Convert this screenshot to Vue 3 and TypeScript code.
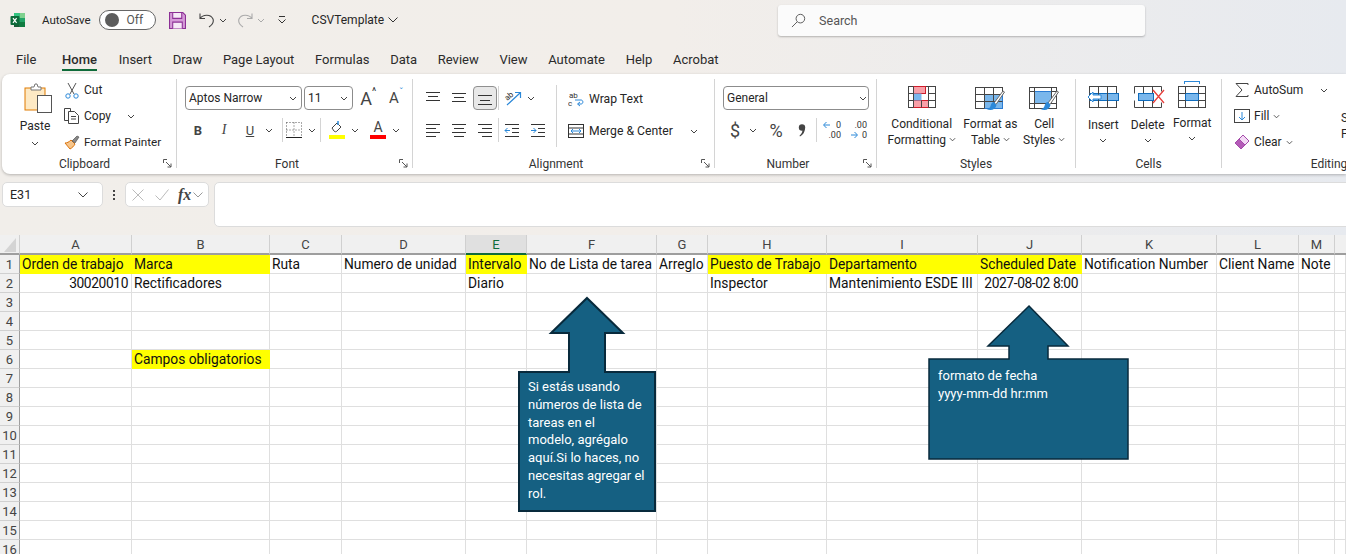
<template>
  <div class="app">
    <!-- Title bar -->
    <header class="titlebar">
      <svg class="logo" viewBox="0 0 16 16" width="16" height="16">
        <rect x="4" y="1" width="11" height="14" rx="1.2" fill="#21a366" />
        <rect x="9.5" y="1" width="5.5" height="5" fill="#7fd18f" />
        <rect x="4" y="1" width="5.5" height="5" fill="#33c481" />
        <rect x="9.5" y="10" width="5.5" height="5" fill="#107c41" />
        <rect x="4" y="10" width="5.5" height="5" fill="#185c37" />
        <rect x="0.5" y="4" width="9" height="9" rx="1" fill="#0b6a39" />
        <path d="M3 6.2l3.6 4.6M6.6 6.2L3 10.8" stroke="#fff" stroke-width="1.2" />
      </svg>
      <span class="autosave">AutoSave</span>
      <span class="toggle"><i class="knob" /><span>Off</span></span>
      <svg class="save" viewBox="0 0 16 16" width="17" height="17">
        <path d="M.5.5h12.5l2.5 2.5v12.5H.5z" fill="#d59ad8" stroke="#8c2f95" />
        <path d="M3.5.5h8.5v5.5H3.5zM3.5 15.5v-6h9v6" fill="#f6e8f7" stroke="#8c2f95" />
      </svg>
      <svg class="undo" viewBox="0 0 16 16" width="16" height="16" fill="none" stroke="#444" stroke-width="1.1">
        <path d="M1 1.5v5h5M1 6.5c3-4.5 11-4.500 13 .5 1 3-1 6-4 8" />
      </svg>
      <svg class="chev qat" viewBox="0 0 8 5"><path d="M1 1l3 3 3-3" /></svg>
      <svg class="redo" viewBox="0 0 16 16" width="16" height="16" fill="none" stroke="#aaa" stroke-width="1.1">
        <path d="M15 1.500v5h-5M15 6.500c-3-4.500-11-4.500-13 .5-1 3 1 6 4 8" />
      </svg>
      <svg class="chev qat muted" viewBox="0 0 8 5"><path d="M1 1l3 3 3-3" /></svg>
      <svg class="custom" viewBox="0 0 10 8" width="10" height="8" fill="none" stroke="#333">
        <path d="M2 .5h6M1.500 3.500L5 7l3.500-3.500" />
      </svg>
      <span class="docname">CSVTemplate</span>
      <svg class="doc-chev" viewBox="0 0 10 6" width="10" height="6" fill="none" stroke="#333">
        <path d="M.5.5L5 5 9.500.5" />
      </svg>
      <div class="search">
        <svg viewBox="0 0 16 16" width="15" height="15" fill="none" stroke="#555">
          <circle cx="10" cy="6" r="4.600" />
          <path d="M6.500 9.500L1 15" />
        </svg>
        <span>Search</span>
      </div>
    </header>

    <!-- Tabs -->
    <nav class="tabs">
      <span v-for="tab in tabs" :key="tab" class="tab" :class="{ active: tab === 'Home' }">{{ tab }}</span>
    </nav>

    <!-- Ribbon -->
    <section class="ribbon">
      <!-- Clipboard -->
      <div class="group g-clipboard">
        <div class="group-body">
          <div class="paste">
            <svg viewBox="0 0 28 30" width="28" height="30">
              <rect x="1" y="5" width="20" height="22" fill="#fde9c4" stroke="#e07b00" />
              <path d="M7 7V4h3l1-3h2l1 3h3v3z" fill="#fff" stroke="#777" />
              <rect x="13.500" y="12.500" width="14" height="17" fill="#fff" stroke="#555" />
            </svg>
            <span>Paste</span>
            <svg class="chev" viewBox="0 0 8 5"><path d="M1 1l3 3 3-3" /></svg>
          </div>
          <div class="clip-list">
            <div class="clip-row">
              <svg class="scissors" viewBox="0 0 14 17" width="14" height="17" fill="none" stroke="#555">
                <path d="M3 1l6 11M11 1L5 12" />
                <circle cx="3" cy="14" r="2.200" stroke="#2b88d8" />
                <circle cx="11" cy="14" r="2.200" stroke="#2b88d8" />
              </svg>
              <span>Cut</span>
            </div>
            <div class="clip-row">
              <svg viewBox="0 0 16 16" width="16" height="16" fill="none" stroke="#444">
                <path d="M4 12.500H.5V.5h6v3" />
                <path d="M4.500 3.500h6l4 4v8h-10z" fill="#fff" />
                <path d="M7 8.500h5M7 11h5" />
              </svg>
              <span>Copy</span>
              <svg class="chev copy-chev" viewBox="0 0 8 5"><path d="M1 1l3 3 3-3" /></svg>
            </div>
            <div class="clip-row">
              <svg viewBox="0 0 16 16" width="16" height="16">
                <path d="M1 9l5 6c2-1 4-3 5-5L7 6C5 8 3 9 1 9z" fill="#f7c58a" stroke="#d9730d" />
                <path d="M8 7l5-5 2 1-4 6z" fill="#888" stroke="#555" stroke-width=".7" />
              </svg>
              <span class="painter">Format Painter</span>
            </div>
          </div>
        </div>
        <footer class="group-label launch clip-label">
          Clipboard
          <svg class="launcher" viewBox="0 0 9 9" width="9" height="9" fill="none" stroke="#555"><path d="M.5 4V.5H4M3 3l5 5M8 4.500V8H4.500" /></svg>
        </footer>
      </div>

      <!-- Font -->
      <div class="group g-font">
        <div class="group-body stacked">
          <div class="font-row">
            <div class="combo font-name">
              <span>Aptos Narrow</span>
              <svg class="chev" viewBox="0 0 8 5"><path d="M1 1l3 3 3-3" /></svg>
            </div>
            <div class="combo font-size">
              <span>11</span>
              <svg class="chev" viewBox="0 0 8 5"><path d="M1 1l3 3 3-3" /></svg>
            </div>
            <span class="grow big">A<sup class="caret">^</sup></span>
            <span class="grow small">A<sup class="caret blue">ˇ</sup></span>
          </div>
          <div class="font-row tools">
            <b class="tool fmt">B</b>
            <i class="tool fmt serif">I</i>
            <u class="tool fmt">U</u>
            <svg class="chev slim" viewBox="0 0 8 5"><path d="M1 1l3 3 3-3" /></svg>
            <span class="vsep first" />
            <svg class="tool-ico" viewBox="0 0 16 16" width="16" height="16" fill="none" stroke="#555" stroke-dasharray="1 2">
              <path d="M.5 .5h15v15M.5.5v15M8 .5v15M.5 8h15" />
              <path d="M0 15.500h16" stroke="#222" stroke-dasharray="none" />
            </svg>
            <svg class="chev slim" viewBox="0 0 8 5"><path d="M1 1l3 3 3-3" /></svg>
            <span class="vsep second" />
            <span class="color-ico fill-ico">
              <svg viewBox="0 0 16 12" width="16" height="12" fill="none" stroke="#444">
                <path d="M3 7l5-5 4 4-4 4c-1 1-2 1-3 0z" fill="#fff" />
                <path d="M9 4V0" stroke="#2b88d8" stroke-width="1.500" />
              </svg>
              <i class="swatch yellow" />
            </span>
            <svg class="chev fill-chev" viewBox="0 0 8 5"><path d="M1 1l3 3 3-3" /></svg>
            <span class="color-ico text-ico">A<i class="swatch red" /></span>
            <svg class="chev color-chev" viewBox="0 0 8 5"><path d="M1 1l3 3 3-3" /></svg>
          </div>
        </div>
        <footer class="group-label launch">
          Font
          <svg class="launcher" viewBox="0 0 9 9" width="9" height="9" fill="none" stroke="#555"><path d="M.5 4V.5H4M3 3l5 5M8 4.500V8H4.500" /></svg>
        </footer>
      </div>

      <!-- Alignment -->
      <div class="group g-align">
        <div class="group-body">
          <div class="align-grid">
            <span
              v-for="icon in alignIcons"
              :key="icon.name"
              class="align-cell"
              :class="{ selected: icon.name === 'bottom' }"
            >
              <svg viewBox="0 0 16 16" width="16" height="16" stroke="#333" fill="none">
                <path v-for="(d, i) in icon.lines" :key="i" :d="d" />
              </svg>
            </span>
            <span class="grid-sep sep-a" />
            <span class="grid-sep sep-b" />
            <span class="orient">
              <svg viewBox="0 0 18 16" width="18" height="16" fill="none">
                <path d="M3 15L16 3M11 2.500h5.500V8" stroke="#2b88d8" stroke-width="1.200" />
                <text x="1" y="9" font-size="8" fill="#333" transform="rotate(-40 5 7)">ab</text>
              </svg>
              <svg class="chev" viewBox="0 0 8 5"><path d="M1 1l3 3 3-3" /></svg>
            </span>
            <span class="align-cell">
              <svg viewBox="0 0 16 16" width="16" height="16" fill="none" stroke="#333">
                <path d="M1 2.500h14M8 6.500h7M8 10.500h7M1 14.500h14" />
                <path d="M6 8.500H1M3.500 6L1 8.500 3.500 11" stroke="#2b88d8" />
              </svg>
            </span>
            <span class="align-cell">
              <svg viewBox="0 0 16 16" width="16" height="16" fill="none" stroke="#333">
                <path d="M1 2.500h14M8 6.500h7M8 10.500h7M1 14.500h14" />
                <path d="M1 8.500h5M3.500 6L6 8.500 3.500 11" stroke="#2b88d8" />
              </svg>
            </span>
          </div>
          <div class="wrap-col">
            <div class="wrap-row">
              <svg viewBox="0 0 16 16" width="16" height="16" fill="none">
                <text x="1" y="7" font-size="8" fill="#333">ab</text>
                <text x="0" y="15" font-size="8" fill="#333">c</text>
                <path d="M10 13h3c2.500 0 2.500-4 0-4H7M12 11l-2.500 2 2.500 2" stroke="#2b88d8" />
              </svg>
              <span>Wrap Text</span>
            </div>
            <div class="wrap-row">
              <svg viewBox="0 0 16 16" width="16" height="16" fill="none" stroke="#333">
                <rect x=".5" y="1.500" width="15" height="13" fill="#fff" />
                <path d="M.5 5h15M.5 11h15" />
                <path d="M3 8h10M5 6L3 8l2 2M11 6l2 2-2 2" stroke="#2b88d8" />
              </svg>
              <span>Merge &amp; Center</span>
              <svg class="chev merge-chev" viewBox="0 0 8 5"><path d="M1 1l3 3 3-3" /></svg>
            </div>
          </div>
        </div>
        <footer class="group-label launch">
          Alignment
          <svg class="launcher" viewBox="0 0 9 9" width="9" height="9" fill="none" stroke="#555"><path d="M.5 4V.5H4M3 3l5 5M8 4.500V8H4.500" /></svg>
        </footer>
      </div>

      <!-- Number -->
      <div class="group g-number">
        <div class="group-body stacked">
          <div class="combo number-format">
            <span>General</span>
            <svg class="chev" viewBox="0 0 8 5"><path d="M1 1l3 3 3-3" /></svg>
          </div>
          <div class="number-tools">
            <span class="num-sym dollar">$</span>
            <svg class="chev" viewBox="0 0 8 5"><path d="M1 1l3 3 3-3" /></svg>
            <span class="num-sym percent">%</span>
            <svg class="comma" viewBox="0 0 8 13" width="8" height="13" fill="#444">
              <circle cx="4" cy="3.500" r="3.200" />
              <path d="M7 4c0 4-2 7-5 8.500l-.5-.8C3.500 10 4.500 8 4.500 5.500z" />
            </svg>
            <span class="vsep" />
            <span class="dec">
              <svg viewBox="0 0 7 8" width="7" height="8" fill="none" stroke="#2b88d8"><path d="M7 4H1M3.500 1L.5 4l3 3" /></svg>
              <em>0</em>
              <em class="low">.00</em>
            </span>
            <span class="dec right">
              <em>.00</em>
              <em class="low">0</em>
              <svg viewBox="0 0 7 8" width="7" height="8" fill="none" stroke="#2b88d8"><path d="M0 4h6M3.500 1l3 3-3 3" /></svg>
            </span>
          </div>
        </div>
        <footer class="group-label launch">
          Number
          <svg class="launcher" viewBox="0 0 9 9" width="9" height="9" fill="none" stroke="#555"><path d="M.5 4V.5H4M3 3l5 5M8 4.500V8H4.500" /></svg>
        </footer>
      </div>

      <!-- Styles -->
      <div class="group g-styles">
        <div class="group-body">
          <div class="big-btn conditional">
            <svg viewBox="0 0 28 22" width="28" height="22" fill="none" stroke="#444">
              <rect x=".5" y=".5" width="27" height="21" fill="#fff" />
              <rect x="5.500" y=".5" width="12" height="7" fill="#f8a0a8" stroke="#d01c2a" />
              <rect x="5.500" y="14.500" width="15" height="7" fill="#f8a0a8" stroke="#d01c2a" />
              <rect x="5.500" y="7.500" width="8" height="7" fill="#7ab7ec" stroke="none" />
              <path d="M.5 7.500h5M.5 14.500h5M5.500 .5v21M20.500 .5v21M13.500 14.500v7M20.500 7.500h7M20.500 14.500h7" />
            </svg>
            <span>Conditional<br />Formatting <svg class="chev tiny" viewBox="0 0 8 5"><path d="M1 1l3 3 3-3" /></svg></span>
          </div>
          <div class="big-btn as-table">
            <svg viewBox="0 0 30 26" width="30" height="26" fill="none" stroke="#444">
              <rect x=".5" y="1.500" width="27" height="21" fill="#fff" />
              <rect x="9.500" y="8.500" width="18" height="14" fill="#7ab7ec" stroke="#2b7cd3" />
              <path d="M.5 8.500h27M.5 15.500h27M9.500 1.500v21M18.500 1.500v21" />
              <path d="M19 17L28 5l1.500 1L21 18.500z" fill="#fff" stroke="#666" />
              <path d="M19 16c-2 0-3 2-3.500 4-.5 2-2 3-4 3 4 2 9 1 10-4z" fill="#2b88d8" stroke="none" />
            </svg>
            <span>Format as<br />Table <svg class="chev tiny" viewBox="0 0 8 5"><path d="M1 1l3 3 3-3" /></svg></span>
          </div>
          <div class="big-btn cell-styles">
            <svg viewBox="0 0 30 26" width="30" height="26" fill="none" stroke="#444">
              <rect x=".5" y="1.500" width="27" height="21" fill="#fff" />
              <rect x="5.500" y="5.500" width="17" height="12" fill="#7ab7ec" stroke="#2b7cd3" />
              <path d="M.5 5.500h5M22.500 5.500h5M.5 17.500h27M5.500 1.500v21M22.500 1.500v16" />
              <path d="M19 17L28 5l1.500 1L21 18.500z" fill="#fff" stroke="#666" />
              <path d="M19 16c-2 0-3 2-3.500 4-.5 2-2 3-4 3 4 2 9 1 10-4z" fill="#2b88d8" stroke="none" />
            </svg>
            <span>Cell<br />Styles <svg class="chev tiny" viewBox="0 0 8 5"><path d="M1 1l3 3 3-3" /></svg></span>
          </div>
        </div>
        <footer class="group-label">Styles</footer>
      </div>

      <!-- Cells -->
      <div class="group g-cells">
        <div class="group-body">
          <div class="cell-btn">
            <svg viewBox="0 0 32 22" width="32" height="22" fill="none" stroke="#444">
              <rect x="2.500" y=".5" width="27" height="21" fill="#fff" />
              <rect x="2.500" y="7.500" width="29" height="7" fill="#7ab7ec" stroke="#0f6cbd" />
              <path d="M2.500 7.500v7M11.500 .5v21M20.500 .5v21" />
              <path d="M14 9H6V6l-5 5 5 5v-3h8z" fill="#fff" stroke="#2b88d8" />
            </svg>
            <span>Insert</span>
            <svg class="chev" viewBox="0 0 8 5"><path d="M1 1l3 3 3-3" /></svg>
          </div>
          <div class="cell-btn delete">
            <svg viewBox="0 0 32 22" width="32" height="22" fill="none" stroke="#444">
              <path d="M.5 .5h27M.5 21.500h27M.5 .5v7M.5 14.500v7M9.500 .5v7M9.500 14.500v7M18.500 .5v7M18.500 14.500v7M27.500 .5v5M27.500 16.500v5" />
              <rect x="4.500" y="7.500" width="15" height="7" fill="#7ab7ec" stroke="#0f6cbd" />
              <path d="M19 4l11 13M30 4L19 17" stroke="#e8413e" stroke-width="1.300" />
            </svg>
            <span>Delete</span>
            <svg class="chev" viewBox="0 0 8 5"><path d="M1 1l3 3 3-3" /></svg>
          </div>
          <div class="cell-btn format">
            <svg viewBox="0 0 28 27" width="28" height="27" fill="none" stroke="#444">
              <path d="M6.500 .5h15M6.500 0v3M21.500 0v3" stroke="#2b88d8" />
              <rect x=".5" y="5.500" width="27" height="21" fill="#fff" />
              <rect x="7.500" y="12.500" width="13" height="7" fill="#7ab7ec" stroke="#0f6cbd" />
              <path d="M.5 12.500h7M20.500 12.500h7M.5 19.500h7M20.500 19.500h7M7.500 5.500v7M20.500 5.500v7M7.500 19.500v7M20.500 19.500v7" />
            </svg>
            <span>Format</span>
            <svg class="chev" viewBox="0 0 8 5"><path d="M1 1l3 3 3-3" /></svg>
          </div>
        </div>
        <footer class="group-label">Cells</footer>
      </div>

      <!-- Editing: runs past the window's right edge, as in the app -->
      <div class="group g-editing">
        <div class="group-body">
          <div class="edit-list">
            <div class="edit-row">
              <svg viewBox="0 0 16 16" width="16" height="16" fill="none" stroke="#444"><path d="M14 3V1.500H2L8 8l-6 6.500h12V13" /></svg>
              <span>AutoSum</span>
              <svg class="chev sum-chev" viewBox="0 0 8 5"><path d="M1 1l3 3 3-3" /></svg>
            </div>
            <div class="edit-row">
              <svg viewBox="0 0 16 16" width="16" height="16" fill="none" stroke="#444">
                <rect x=".5" y="1.500" width="15" height="13" fill="#fff" />
                <path d="M8 4v8M5 9l3 3 3-3" stroke="#2b88d8" />
              </svg>
              <span>Fill</span>
              <svg class="chev tiny" viewBox="0 0 8 5"><path d="M1 1l3 3 3-3" /></svg>
            </div>
            <div class="edit-row">
              <svg viewBox="0 0 16 16" width="16" height="16">
                <path d="M1 9l8-8 6 6-8 8z" fill="#f3d9f5" stroke="#a44aa9" />
                <path d="M1 9l4-4 6 6-4 4z" fill="#b45bb8" stroke="#a44aa9" />
              </svg>
              <span>Clear</span>
              <svg class="chev tiny" viewBox="0 0 8 5"><path d="M1 1l3 3 3-3" /></svg>
            </div>
          </div>
          <div class="sort-btn">Sort &amp;<br />Filter</div>
        </div>
        <footer class="group-label edit-label">Editing</footer>
      </div>
    </section>

    <!-- Formula bar -->
    <section class="formula-bar">
      <div class="name-box">
        <span>E31</span>
        <svg viewBox="0 0 10 6" width="10" height="6" fill="none" stroke="#444"><path d="M.5.5L5 5 9.500.5" /></svg>
      </div>
      <span class="dots"><i /><i /><i /></span>
      <div class="fx-box">
        <svg viewBox="0 0 12 12" width="12" height="12" fill="none" stroke="#bbb"><path d="M.5.5l11 11M11.500.5l-11 11" /></svg>
        <svg class="check" viewBox="0 0 14 12" width="14" height="12" fill="none" stroke="#bbb"><path d="M.5 6.500L5 11 13.500.5" /></svg>
        <em class="fx">fx</em>
        <svg viewBox="0 0 10 6" width="10" height="6" fill="none" stroke="#999"><path d="M.5.5L5 5 9.500.5" /></svg>
      </div>
      <div class="formula-input" />
    </section>

    <!-- Sheet -->
    <section class="sheet">
      <div class="corner">
        <svg viewBox="0 0 12 14" width="12" height="14"><path d="M12 0v14H0z" fill="#d4d4d4" /></svg>
      </div>
      <div
        v-for="col in columns"
        :key="col"
        class="col-head"
        :class="{ current: col === 'E' }"
      >
        {{ col }}
      </div>
      <div class="col-head filler" />

      <template v-for="row in rows" :key="row">
        <div class="row-head">{{ row }}</div>
        <div
          v-for="col in columns"
          :key="col"
          class="cell"
          :class="[cells[col + row]?.fill && 'fill', cells[col + row]?.right && 'right']"
        >
          {{ cells[col + row]?.text }}
        </div>
        <div class="cell" />
      </template>

      <!-- Callouts float above the cells -->
      <div class="callout task-note">
        <svg viewBox="0 0 138 215" width="138" height="215">
          <polygon points="69,1 105,36 87,36 87,75 137,75 137,214 1,214 1,75 51,75 51,36 33,36" />
        </svg>
        <p>
          Si estás usando<br />números de lista de<br />tareas en el<br />modelo, agrégalo<br />aquí.Si lo haces, no<br />necesitas agregar el<br />rol.
        </p>
      </div>
      <div class="callout date-note">
        <svg viewBox="0 0 201 155" width="201" height="155">
          <polygon points="101,1 140,41 120,41 120,54 200,54 200,154 1,154 1,54 81,54 81,41 60,41" />
        </svg>
        <p>formato de fecha<br />yyyy-mm-dd hr:mm</p>
      </div>
    </section>
  </div>
</template>

<script setup lang="ts">
interface CellData {
  text: string
  fill?: boolean
  right?: boolean
}

const tabs = [
  'File', 'Home', 'Insert', 'Draw', 'Page Layout', 'Formulas',
  'Data', 'Review', 'View', 'Automate', 'Help', 'Acrobat',
]

const columns = ['A', 'B', 'C', 'D', 'E', 'F', 'G', 'H', 'I', 'J', 'K', 'L', 'M']
const rows = Array.from({ length: 16 }, (_, i) => i + 1)

const cells: Record<string, CellData> = {
  A1: { text: 'Orden de trabajo', fill: true },
  B1: { text: 'Marca', fill: true },
  C1: { text: 'Ruta' },
  D1: { text: 'Numero de unidad' },
  E1: { text: 'Intervalo', fill: true },
  F1: { text: 'No de Lista de tarea' },
  G1: { text: 'Arreglo' },
  H1: { text: 'Puesto de Trabajo', fill: true },
  I1: { text: 'Departamento', fill: true },
  J1: { text: 'Scheduled Date', fill: true },
  K1: { text: 'Notification Number' },
  L1: { text: 'Client Name' },
  M1: { text: 'Note' },
  A2: { text: '30020010', right: true },
  B2: { text: 'Rectificadores' },
  E2: { text: 'Diario' },
  H2: { text: 'Inspector' },
  I2: { text: 'Mantenimiento ESDE III' },
  J2: { text: '2027-08-02 8:00', right: true },
  B6: { text: 'Campos obligatorios', fill: true },
}

const alignIcons: { name: string; lines: string[] }[] = [
  { name: 'top', lines: ['M1 2.500h14', 'M3 6.500h10', 'M1 10.500h14'] },
  { name: 'middle', lines: ['M1 3.500h14', 'M3 7.500h10', 'M1 11.500h14'] },
  { name: 'bottom', lines: ['M1 5.500h14', 'M3 10.500h10', 'M1 14.500h14'] },
  { name: 'left', lines: ['M1 2.500h14', 'M1 6.500h10', 'M1 10.500h14', 'M1 14.500h10'] },
  { name: 'center', lines: ['M1 2.500h14', 'M3 6.500h10', 'M1 10.500h14', 'M3 14.500h10'] },
  { name: 'right', lines: ['M1 2.500h14', 'M5 6.500h10', 'M1 10.500h14', 'M5 14.500h10'] },
]
</script>

<style>
html,
body {
  margin: 0;
  overflow: hidden;
}
</style>

<style scoped>
.app {
  width: 1346px;
  height: 554px;
  overflow: hidden;
  background: linear-gradient(90deg, #f1eeea 0%, #f2eeea 50%, #e7eaef 100%);
  font-family: Roboto, "Noto Sans", sans-serif;
  font-size: 12px;
  color: #262626;
}

svg {
  display: block;
  flex-shrink: 0;
}

/* ── Title bar ── */
.titlebar {
  height: 40px;
  display: flex;
  align-items: center;
  padding-left: 10px;
  box-sizing: border-box;
}

.autosave {
  margin-left: 16px;
  font-size: 11.5px;
}

.toggle {
  margin-left: 8px;
  width: 57px;
  height: 20px;
  box-sizing: border-box;
  border: 1px solid #666;
  border-radius: 10px;
  background: #fff;
  display: flex;
  align-items: center;
  gap: 8px;
  padding-left: 5px;
  font-size: 12px;
  color: #555;
}

.knob {
  width: 14px;
  height: 14px;
  border-radius: 50%;
  background: #5c5c5c;
}

.save {
  margin-left: 13px;
}

.undo {
  margin-left: 13px;
}

.qat {
  margin-left: 4px;
}

.redo {
  margin-left: 10px;
}

.custom {
  margin-left: 12px;
}

.docname {
  margin-left: 25px;
  font-size: 12px;
}

.doc-chev {
  margin-left: 4px;
}

.search {
  margin-left: 380px;
  width: 367px;
  height: 31px;
  box-sizing: border-box;
  background: #fbfbfb;
  border-radius: 3px;
  box-shadow: 0 1px 2px rgba(0, 0, 0, 0.25);
  display: flex;
  align-items: center;
  gap: 13px;
  padding-left: 13px;
  font-size: 12.5px;
  color: #555;
}

/* ── Tabs ── */
.tabs {
  height: 34px;
  display: flex;
  gap: 20.7px;
  padding-left: 16px;
  box-sizing: border-box;
}

.tab {
  position: relative;
  font-size: 13px;
  line-height: 39px;
  color: #2b2b2b;
}

.tab.active {
  font-weight: 500;
  margin-left: 5px;
  margin-right: 1px;
}

.tab.active::after {
  content: "";
  position: absolute;
  left: 0;
  right: 0;
  bottom: 3px;
  height: 2px;
  background: #0e6b3a;
}

/* ── Ribbon ── */
.ribbon {
  height: 100px;
  margin-left: 2px;
  box-sizing: border-box;
  padding: 5px 0 6px;
  display: flex;
  background: #fff;
  border-radius: 8px 0 0 8px;
  box-shadow: 0 1px 3px rgba(0, 0, 0, 0.25);
  overflow: hidden;
}

.group {
  display: flex;
  flex-direction: column;
  border-right: 1px solid #d4d4d4;
  box-sizing: border-box;
  flex-shrink: 0;
}

.group-body {
  flex: 1;
  display: flex;
  padding-top: 7px;
  min-height: 0;
}

.stacked {
  flex-direction: column;
}

.group-label {
  position: relative;
  height: 16px;
  margin-bottom: -4px;
  line-height: 16px;
  text-align: center;
  font-size: 12px;
  color: #333;
}

.group-label.launch {
  padding-right: 15px;
}

.group-label.clip-label {
  padding-right: 9px;
}

.group-label.edit-label {
  padding-right: 8px;
}

.launcher {
  position: absolute;
  right: 4px;
  top: 3px;
}

.chev {
  width: 8px;
  height: 5px;
  fill: none;
  stroke: #444;
  stroke-width: 1;
}

.chev.muted {
  stroke: #aaa;
}

.chev.tiny {
  display: inline-block;
  vertical-align: 2px;
  width: 7px;
}

.g-clipboard {
  width: 175px;
}

.paste {
  margin-left: 18px;
  width: 30px;
  display: flex;
  flex-direction: column;
  align-items: center;
  font-size: 12px;
  margin-top: -3px;
}

.paste svg:first-child {
  margin-left: 5px;
}

.paste span {
  margin-top: 6px;
}

.paste .chev {
  margin-top: 8px;
}

.clip-list {
  margin-left: 13px;
  display: flex;
  flex-direction: column;
  gap: 10px;
  margin-top: -4px;
}

.clip-row {
  height: 16px;
  display: flex;
  align-items: center;
  gap: 4px;
  padding-left: 1px;
}

.scissors {
  margin: 0 1px;
}

.painter {
  font-size: 11.7px;
}

.copy-chev {
  margin-left: 12px;
}

.g-font {
  width: 236px;
}

.font-row {
  display: flex;
  align-items: center;
  padding-left: 8px;
  height: 24px;
}

.tools {
  margin-top: 8px;
}

.combo {
  height: 24px;
  box-sizing: border-box;
  border: 1px solid #8c8c8c;
  border-radius: 4px;
  display: flex;
  align-items: center;
  justify-content: space-between;
  padding: 0 4px 0 3px;
  font-size: 12px;
  background: #fff;
}

.font-name {
  width: 117px;
}

.font-size {
  width: 49px;
  margin-left: 2px;
}

.grow {
  position: relative;
  width: 26px;
  text-align: center;
  font-size: 16px;
  color: #444;
}

.grow.big {
  font-size: 18px;
}

.grow.small {
  font-size: 15px;
  margin-left: 2px;
}

.caret {
  position: absolute;
  top: -2px;
  font-size: 10px;
  color: #2b2b2b;
  line-height: 12px;
}

.caret.blue {
  color: #2b88d8;
}

.fmt {
  width: 26px;
  text-align: center;
  font-size: 13px;
  color: #444;
}

.serif {
  font-family: "Liberation Serif", serif;
  font-size: 14px;
}

.slim {
  margin: 0 2px;
}

.vsep {
  width: 1px;
  height: 24px;
  background: #d4d4d4;
}

.vsep.first {
  margin: 0 3px 0 7px;
}

.vsep.second {
  margin: 0 8px 0 2px;
}

.tool-ico {
  margin-right: 4px;
}

.color-ico {
  position: relative;
  width: 16px;
  height: 18px;
  display: block;
}

.swatch {
  position: absolute;
  left: 0;
  bottom: 0;
  width: 16px;
  height: 4px;
}

.swatch.yellow {
  background: #ffff00;
}

.swatch.red {
  background: #ff0000;
}

.fill-chev {
  margin: 0 2px 0 6px;
}

.text-ico {
  font-size: 14px;
  text-align: center;
  line-height: 13px;
  margin-left: 9px;
  color: #444;
}

.color-chev {
  margin-left: 6px;
}

.g-align {
  width: 302px;
}

.align-grid {
  margin-left: 7px;
  display: grid;
  grid-template-columns: 26px 26px 26px 1px 26px 26px;
  grid-auto-rows: 24px;
  row-gap: 8px;
  align-items: center;
  justify-items: center;
  align-self: flex-start;
}

.align-cell {
  width: 24px;
  height: 24px;
  box-sizing: border-box;
  display: flex;
  align-items: center;
  justify-content: center;
  border-radius: 4px;
}

.align-cell.selected {
  background: #e8e8e8;
  border: 1px solid #8f8f8f;
}

.grid-sep {
  width: 1px;
  height: 24px;
  background: #d4d4d4;
  grid-column: 4;
}

.sep-a {
  grid-row: 1;
}

.sep-b {
  grid-row: 2;
}

.orient {
  grid-column: 5 / 7;
  grid-row: 1;
  display: flex;
  align-items: center;
  gap: 5px;
  justify-self: start;
  padding-left: 5px;
}

.wrap-col {
  margin-left: 5px;
  padding-left: 11px;
  border-left: 1px solid #d4d4d4;
  height: 62px;
  display: flex;
  flex-direction: column;
  gap: 16px;
  margin-top: -1px;
  padding-top: 6px;
  box-sizing: border-box;
}

.wrap-row {
  height: 16px;
  display: flex;
  align-items: center;
  gap: 5px;
  font-size: 12.2px;
}

.merge-chev {
  margin-left: 12px;
}

.g-number {
  width: 162px;
}

.number-format {
  width: 146px;
  margin-left: 8px;
  padding-right: 1px;
}

.number-tools {
  margin: 8px 0 0 8px;
  height: 24px;
  display: flex;
  align-items: center;
}

.num-sym {
  text-align: center;
  color: #444;
}

.dollar {
  width: 24px;
  font-size: 18px;
}

.number-tools .chev {
  margin-left: 2px;
}

.percent {
  width: 26px;
  margin-left: 6px;
  font-size: 18px;
}

.comma {
  margin: 0 10px 0 9px;
}

.number-tools .vsep {
  margin: 0;
}

.dec {
  position: relative;
  width: 26px;
  height: 20px;
  font-size: 9px;
  line-height: 10px;
  color: #333;
  display: block;
}

.dec em {
  font-style: normal;
  position: absolute;
  right: 2px;
  top: 0;
}

.dec em.low {
  top: 10px;
}

.dec svg {
  position: absolute;
  left: 6px;
  top: 1px;
}

.dec.right svg {
  left: 8px;
  top: 11px;
}

.g-styles {
  width: 199px;
}

.big-btn {
  display: flex;
  flex-direction: column;
  align-items: center;
  text-align: center;
  line-height: 16px;
  white-space: nowrap;
}

.big-btn span {
  margin-top: 8px;
}

.conditional {
  width: 90px;
}

.as-table {
  width: 46px;
  margin-left: 1px;
}

.cell-styles {
  width: 62px;
}

.as-table span,
.cell-styles span {
  margin-top: 4px;
}

.g-cells {
  width: 146px;
}

.cell-btn {
  width: 44.5px;
  display: flex;
  flex-direction: column;
  align-items: center;
}

.cell-btn:first-child {
  margin-left: 5px;
}

.cell-btn span {
  margin-top: 9px;
  line-height: 16px;
}

.cell-btn .chev {
  margin-top: 5px;
}

.cell-btn.delete svg:first-child {
  margin-left: 4px;
}

.cell-btn.format {
  margin-top: -5px;
}

.cell-btn.format span {
  margin-top: 7px;
}

.g-editing {
  width: 222px;
  border-right: 0;
}

.edit-list {
  margin-left: 12px;
  display: flex;
  flex-direction: column;
  gap: 10px;
  margin-top: -4px;
  width: 106px;
}

.edit-row {
  height: 16px;
  display: flex;
  align-items: center;
  gap: 4px;
}

.sum-chev {
  margin-left: 13px;
}

.sort-btn {
  margin: 24px 0 0 1px;
  line-height: 16px;
  white-space: nowrap;
}

/* ── Formula bar ── */
.formula-bar {
  height: 61px;
  box-sizing: border-box;
  padding: 8px 0 0 2px;
  display: flex;
  align-items: flex-start;
}

.name-box,
.fx-box,
.formula-input {
  background: #fff;
  border: 1px solid #dcdcdc;
  border-radius: 5px;
  box-sizing: border-box;
}

.name-box {
  width: 101px;
  height: 25px;
  display: flex;
  align-items: center;
  justify-content: space-between;
  padding: 0 14px 0 7px;
  font-size: 12.5px;
}

.dots {
  width: 22px;
  height: 25px;
  display: flex;
  flex-direction: column;
  align-items: center;
  justify-content: center;
  gap: 2px;
}

.dots i {
  width: 2px;
  height: 2px;
  background: #444;
}

.fx-box {
  width: 84px;
  height: 25px;
  display: flex;
  align-items: center;
  gap: 0;
  padding-left: 6px;
}

.check {
  margin-left: 11px;
}

.fx {
  margin: 0 2px 0 9px;
  font-family: "Liberation Serif", serif;
  font-size: 16px;
  font-weight: 700;
  color: #444;
}

.formula-input {
  flex: 1;
  margin-left: 5px;
  margin-right: -6px;
  height: 45px;
}

/* ── Sheet ── */
.sheet {
  position: relative;
  display: grid;
  grid-template-columns: 20px 112px 138px 72px 124px 61px 130px 51px 119px 151px 104px 135px 82px 36px 1fr;
  grid-auto-rows: 19px;
  background: #fff;
  font-size: 13.8px;
}

.corner,
.col-head,
.row-head {
  background: #f0f0f0;
  box-sizing: border-box;
  color: #444;
  font-size: 13px;
}

.corner {
  height: 20px;
  border-right: 1px solid #d0d0d0;
  border-bottom: 2px solid #9e9e9e;
  display: flex;
  align-items: flex-end;
  justify-content: flex-end;
  padding: 0 3px 1px 0;
}

.col-head {
  height: 20px;
  border-right: 1px solid #d0d0d0;
  border-bottom: 2px solid #9e9e9e;
  text-align: center;
  line-height: 19px;
}

.col-head.filler {
  border-right: 0;
}

.col-head.current {
  background: #e0e0e0;
  color: #0e6b3a;
  border-bottom-color: #0e6b3a;
}

.row-head {
  border-right: 1px solid #9e9e9e;
  border-bottom: 1px solid #d0d0d0;
  text-align: center;
  line-height: 19px;
  position: relative;
  top: 1px;
}

.cell {
  box-sizing: border-box;
  border-right: 1px solid #dfdfdf;
  border-bottom: 1px solid #dfdfdf;
  padding: 0 2px;
  line-height: 18px;
  white-space: nowrap;
  color: #111;
  position: relative;
  top: 1px;
}

.cell.fill {
  background: #ffff00;
  border-color: #ffff00;
}

.cell.right {
  text-align: right;
  padding-right: 3px;
  letter-spacing: -0.4px;
}

.callout {
  position: absolute;
}

.callout svg {
  overflow: visible;
}

.callout polygon {
  fill: #156082;
  stroke: #082a3c;
  stroke-width: 2;
}

.date-note polygon {
  stroke-width: 1.5;
}

.callout p {
  position: absolute;
  left: 10px;
  margin: 0;
  color: #fff;
  font-size: 13px;
  line-height: 17.8px;
  white-space: nowrap;
}

.task-note {
  left: 518px;
  top: 62px;
}

.task-note p {
  top: 81px;
}

.date-note {
  left: 928px;
  top: 70px;
}

.date-note p {
  top: 62px;
}
</style>
